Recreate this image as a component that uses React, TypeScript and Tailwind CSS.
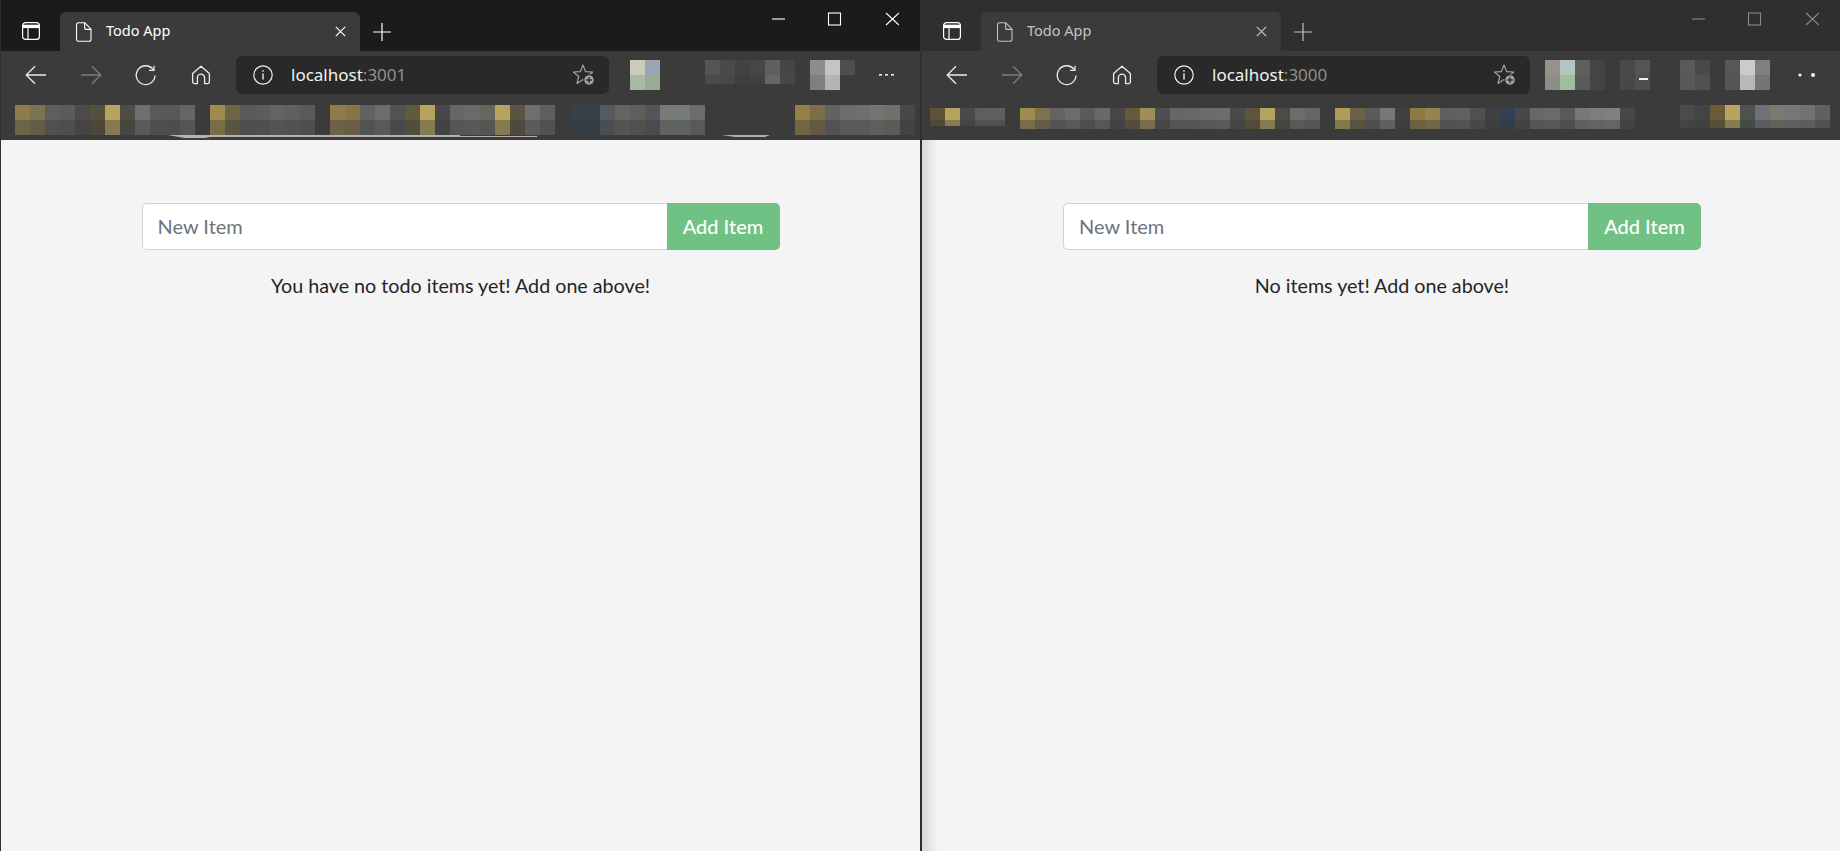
const ui = '"Noto Sans", "Open Sans", sans-serif';

type Run = { x: number; colors: string[]; lower?: string[]; top?: number; bottom?: number };

const leftBookmarks: Run[] = [
  { x: 15, colors: ['#8d7d4c', '#7d7350', '#5e5e5e', '#595b5d', '#4c4b4a', '#55503c', '#b5a35e', '#4f4c42', '#6c7070', '#5c5858', '#55595b', '#666565'] },
  { x: 210, colors: ['#a08b4e', '#6e6548', '#585a5c', '#5a5c5e', '#636364', '#606060', '#5a5a5a'] },
  { x: 330, colors: ['#8d7b4a', '#857548', '#606262', '#6c6c6d', '#525252', '#5f5a3c', '#b5a35e', '#484848', '#666666', '#6a6a6a', '#66665f'] },
  { x: 495, colors: ['#b5a35e', '#5a5540', '#6f6f6f', '#5e6060'] },
  { x: 570, colors: ['#34404a', '#34404a', '#555a5e', '#646462', '#5e5e5c', '#53555a', '#7a7a76', '#767c7c', '#6f6b6a'] },
  { x: 795, colors: ['#957f45', '#7d6e4a', '#5f6163', '#6e6b6b', '#6c706e', '#747474', '#70716a', '#484848'] },
];

const rightBookmarks: Run[] = [
  { x: 930, colors: ['#5b5238', '#b5a35e', '#4a4a4c', '#5e5e5e', '#605f5d'], top: 108, bottom: 126 },
  { x: 1020, colors: ['#a08b4e', '#7d7150', '#636363', '#6c6c6c', '#5b5b5b', '#696969', '#474747', '#66593d', '#a08d58', '#4f4f4f', '#666666', '#686868', '#6b6b6b', '#6d6d6d', '#4a4a4a', '#5e563c', '#b5a35e', '#4c4c45', '#6c6c6c', '#666666'], top: 108, bottom: 129 },
  { x: 1335, colors: ['#b09c58', '#6a6245', '#5b5b5b', '#777777', '#404040', '#8b7a44', '#948452', '#5f5f5f', '#616161', '#505050', '#3f4143', '#2f4058', '#484848', '#686868', '#6a6a6a', '#5a5a5a', '#777777', '#7d7d7d', '#808080', '#484848'], top: 108, bottom: 129 },
  { x: 1680, colors: ['#4b4b4b', '#444444', '#6a5c36', '#b5a35e', '#4e524e', '#70707a', '#7a7a72', '#727876', '#74726c', '#606060'], top: 105, bottom: 128 },
];

const leftExtensions: Run[] = [
  { x: 630, colors: ['#cbcbb8', '#9aa5b3'], lower: ['#a7b9a7', '#99ab93'] },
  { x: 705, colors: ['#555555', '#4a4a4a', '#424242', '#474747', '#5f5f5f', '#454545'], lower: ['#4b4b4b', '#484848', '#3e3e3e', '#414141', '#666666', '#474747'], bottom: 84 },
  { x: 810, colors: ['#8c8c8c', '#c4c4c4', '#4e4e4e'], lower: ['#7f7f7f', '#b4b4b4', '#3b3b3b'] },
];

const rightExtensions: Run[] = [
  { x: 1545, colors: ['#97928b', '#b3c7c0', '#5f5f5f', '#444444'], lower: ['#8d8f86', '#9fbf9d', '#5a5a5a', '#444444'] },
  { x: 1620, colors: ['#494949', '#555555'], lower: ['#484848', '#4f4f4f'] },
  { x: 1680, colors: ['#5a5a5a', '#494949'], lower: ['#585858', '#505050'] },
  { x: 1725, colors: ['#575757', '#cbcbcb', '#808080'], lower: ['#555555', '#b8b8b8', '#757575'] },
];

// blurred-out favicons and bookmark names
function Mosaic({ runs, x, width, top, mid, bottom, children }: { runs: Run[]; x: number; width: number; top: number; mid: number; bottom: number; children?: React.ReactNode }) {
  const height = bottom - top + 6;
  return (
    <svg width={width} height={height} viewBox={`${x} ${top - 3} ${width} ${height}`} className="block shrink-0">
      {runs.map((run) =>
        run.colors.map((color, i) => (
          <g key={`${run.x}-${i}`}>
            <rect x={run.x + i * 15} y={run.top ?? top} width={15} height={mid - (run.top ?? top)} fill={color} />
            <rect
              x={run.x + i * 15}
              y={mid}
              width={15}
              height={(run.bottom ?? bottom) - mid}
              fill={run.lower ? run.lower[i] : color}
              opacity={run.lower ? 1 : 0.62}
            />
          </g>
        )),
      )}
      {children}
    </svg>
  );
}

const PanelIcon = () => (
  <svg width="18" height="18" viewBox="0 0 18 18" fill="none" stroke="#fff" strokeWidth="1.2">
    <rect x=".6" y=".6" width="16.8" height="16.8" rx="3" />
    <path d="M.6 4.4h16.8" strokeWidth="3.4" />
    <path d="M6 5.5v11.9" />
  </svg>
);

const DocIcon = ({ color }: { color: string }) => (
  <svg width="16" height="20" viewBox="0 0 16 20" fill="none" stroke={color} strokeWidth="1.1">
    <path d="M2.5.8h6.3l6.2 6.4v10a2 2 0 0 1-2 2H2.5a2 2 0 0 1-2-2V2.8a2 2 0 0 1 2-2Z" />
    <path d="M8.6 1v4.4a2 2 0 0 0 2 2H15" />
  </svg>
);

const Star = () => (
  <svg width="22" height="22" viewBox="0 0 22 22" fill="none">
    <path d="M10 1 12.6 7.6 19.7 8 14.2 12.5 16 19.4 10 15.6 4 19.4 5.8 12.5.3 8 7.4 7.6Z" stroke="#a3a3a3" strokeWidth="1.2" strokeLinejoin="round" />
    <circle cx="16" cy="16" r="5.2" fill="#a3a3a3" stroke="#292929" strokeWidth="1" />
    <path d="M13.2 16h5.6M16 13.2v5.6" stroke="#2a2a2a" strokeWidth="1.4" />
  </svg>
);

function NavIcons() {
  return (
    <>
      <button className="w-[55px] flex justify-center">
        <svg width="22" height="20" viewBox="0 0 22 20" fill="none" stroke="#ececec" strokeWidth="1.3">
          <path d="M21 10H1.5M10 1.2 1.2 10l8.8 8.8" />
        </svg>
      </button>
      <button className="w-[55px] flex justify-center">
        <svg width="22" height="20" viewBox="0 0 22 20" fill="none" stroke="#7e7e7e" strokeWidth="1.3">
          <path d="M1 10h19.5M12 1.2l8.8 8.8-8.8 8.8" />
        </svg>
      </button>
      <button className="w-[55px] flex justify-center">
        <svg width="21" height="21" viewBox="0 0 21 21" fill="none" stroke="#ececec" strokeWidth="1.3">
          <path d="M18.2 4.6A9.4 9.4 0 1 0 20 10.5" />
          <path d="M19 .8v4.6h-5" />
        </svg>
      </button>
      <button className="w-[55px] flex justify-center">
        <svg width="20" height="20" viewBox="0 0 20 20" fill="none" stroke="#ececec" strokeWidth="1.3" strokeLinejoin="round">
          <path d="M10 1.2 1.6 8.6v8.2a1.8 1.8 0 0 0 1.8 1.8h3v-5.8a3.6 3.6 0 0 1 7.2 0v5.8h3a1.8 1.8 0 0 0 1.8-1.8V8.6Z" />
        </svg>
      </button>
    </>
  );
}

type WindowProps = {
  className: string;
  titleBg: string;
  controlColor: string;
  tabText: string;
  port: string;
  bookmarks: Run[];
  extensions: Run[];
  x: number;
  width: number;
  message: string;
  inactive?: boolean;
};

function BrowserWindow({ className, titleBg, controlColor, tabText, port, bookmarks, extensions, x, width, message, inactive }: WindowProps) {
  return (
    <section className={`flex flex-col h-full min-w-0 ${className}`}>
      <header className={`h-[51px] flex shrink-0 pt-3 ${titleBg}`}>
        <div className="w-[59px] h-[39px] flex items-center justify-center pb-px">
          <PanelIcon />
        </div>
        <div className="w-[300px] h-[39px] bg-[#3b3b3b] rounded-t-md flex items-center pl-[16px] pr-[14px]">
          <DocIcon color={tabText} />
          <span className="ml-[14px] flex-1 pb-[2px] text-[14.5px]" style={{ fontFamily: ui, color: tabText }}>
            Todo App
          </span>
          <svg width="11" height="11" viewBox="0 0 11 11" stroke={tabText} strokeWidth="1.2">
            <path d="M.8.8l9.4 9.4M10.2.8.8 10.2" />
          </svg>
        </div>
        <div className="w-[43px] h-[39px] flex items-center justify-center">
          <svg width="18" height="18" viewBox="0 0 18 18" stroke={tabText} strokeWidth="1.2">
            <path d="M0 9h18M9 0v18" />
          </svg>
        </div>
        <div className="flex-1 flex justify-end pr-[21px]">
          <svg width="127" height="14" viewBox="0 0 127 14" fill="none" stroke={controlColor} strokeWidth="1.1">
            <path d="M0 7h13" />
            <rect x="56.5" y="1" width="12" height="12" />
            <path d="M114 1l13 12M127 1l-13 12" />
          </svg>
        </div>
      </header>
      <div className="h-[89px] shrink-0 bg-[#3b3b3b]">
        <div className="h-[48px] flex items-center">
          <div className="flex w-[235px] pl-[7px]">
            <NavIcons />
          </div>
          <div className="w-[373px] h-[38px] bg-[#292929] rounded-md flex items-center pl-[17px] pr-[14px]">
            <svg width="20" height="20" viewBox="0 0 20 20" fill="none" stroke="#f0f0f0" strokeWidth="1.2">
              <circle cx="10" cy="10" r="9.2" />
              <path d="M10 8.6v6" strokeWidth="1.4" />
              <path d="M10 5.2v1.6" strokeWidth="1.4" />
            </svg>
            <span className="ml-[18px] flex-1 text-[17px] text-[#f2f2f2]" style={{ fontFamily: ui }}>
              localhost<span className="text-[#8f8f8f]">:{port}</span>
            </span>
            <Star />
          </div>
          <div className="ml-[6px]">
            <Mosaic runs={extensions} x={x + 614} width={width - 614} top={60} mid={75} bottom={90}>
              {inactive ? (
                <g fill="#f2f2f2">
                  <rect x="1639" y="78" width="9" height="2" />
                  <circle cx="1800" cy="75" r="1.6" />
                  <circle cx="1813" cy="75" r="2" />
                </g>
              ) : (
                <g fill="#eee">
                  <rect x="879" y="74" width="3" height="1.6" />
                  <rect x="885" y="74" width="3" height="1.6" />
                  <rect x="891" y="74" width="3" height="1.6" />
                </g>
              )}
            </Mosaic>
          </div>
        </div>
        <div className="mt-[3px]">
          <Mosaic runs={bookmarks} x={x} width={width} top={105} mid={120} bottom={135}>
            {!inactive && (
              <g fill="#b4b4b4">
                <path d="M168 135H460V136H537V137H210L200 139H190Z" />
                <path d="M722 135H770L765 137H735Z" />
              </g>
            )}
          </Mosaic>
        </div>
      </div>
      <main className={`flex-1 bg-[#f4f4f4] relative ${inactive ? 'pl-[2px]' : ''}`} style={{ fontFamily: 'Lato, sans-serif' }}>
        {inactive && <div className="absolute inset-y-0 left-0 w-[16px] bg-gradient-to-r from-[#d8d8d8] to-transparent" />}
        <div className="relative w-[638px] mx-auto pt-[63px]">
          <form className="flex h-[47px]">
            <input
              placeholder="New Item"
              className="flex-1 min-w-0 bg-white border border-r-0 border-[#cfd4da] rounded-l-[5px] pl-[15px] pb-[2px] text-[20px] text-[#212529] placeholder:text-[#6c757d] outline-none"
            />
            <button type="button" className="w-[113px] pb-[2px] bg-[#6fc284] rounded-r-[5px] text-white text-[20px] font-medium">
              Add Item
            </button>
          </form>
          <p className="mt-[22px] text-center text-[19.7px] leading-[27px] text-[#212529]">{message}</p>
        </div>
      </main>
    </section>
  );
}

export default function App() {
  return (
    <div className="flex w-[1840px] h-[851px] overflow-hidden">
      <BrowserWindow
        className="w-[921px] shrink-0 border-x border-[#2b3033]"
        titleBg="bg-[#1b1b1b]"
        controlColor="#ffffff"
        tabText="#ffffff"
        port="3001"
        bookmarks={leftBookmarks}
        extensions={leftExtensions}
        x={1}
        width={919}
        message="You have no todo items yet! Add one above!"
      />
      <BrowserWindow
        className="flex-1 border-l border-[#2b3033]"
        titleBg="bg-[#2f2f2f]"
        controlColor="#8a8a8a"
        tabText="#c4c4c4"
        port="3000"
        bookmarks={rightBookmarks}
        extensions={rightExtensions}
        x={922}
        width={918}
        message="No items yet! Add one above!"
        inactive
      />
    </div>
  );
}
